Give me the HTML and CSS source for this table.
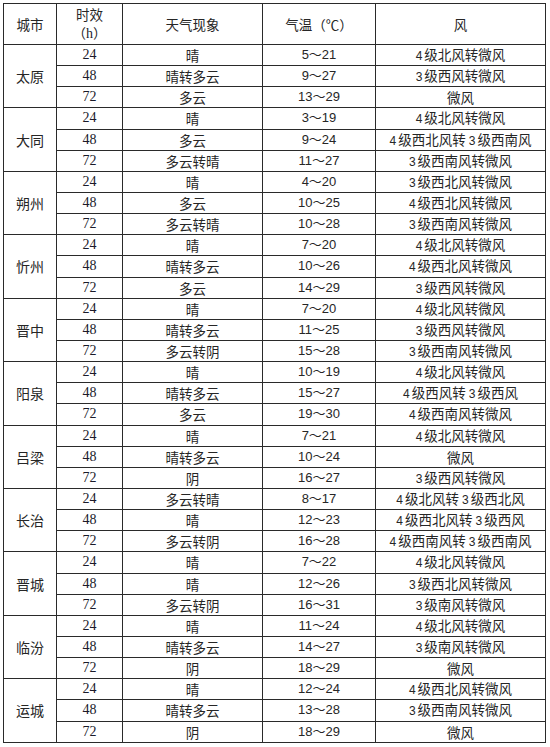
FILE: index.html
```html
<!DOCTYPE html>
<html lang="zh">
<head>
<meta charset="utf-8">
<link rel="stylesheet" href="styles.css">
</head>
<body>
<table class="wx">
<colgroup>
<col class="c-city"><col class="c-h"><col class="c-w"><col class="c-t"><col class="c-f">
</colgroup>
<thead>
<tr class="head"><th>城市</th><th>时效<br><span class="hh">（<span class="num">h</span>）</span></th><th>天气现象</th><th>气温（℃）</th><th>风</th></tr>
</thead>
<tbody>
<tr><td rowspan="3" class="city">太原</td><td class="num">24</td><td>晴</td><td class="tmp">5～21</td><td><span class="d">4</span>级北风转微风</td></tr>
<tr><td class="num">48</td><td>晴转多云</td><td class="tmp">9～27</td><td><span class="d">3</span>级西风转微风</td></tr>
<tr><td class="num">72</td><td>多云</td><td class="tmp">13～29</td><td>微风</td></tr>

<tr><td rowspan="3" class="city">大同</td><td class="num">24</td><td>晴</td><td class="tmp">3～19</td><td><span class="d">4</span>级北风转微风</td></tr>
<tr><td class="num">48</td><td>多云</td><td class="tmp">9～24</td><td><span class="d">4</span>级西北风转 <span class="d">3</span>级西南风</td></tr>
<tr><td class="num">72</td><td>多云转晴</td><td class="tmp">11～27</td><td><span class="d">3</span>级西南风转微风</td></tr>

<tr><td rowspan="3" class="city">朔州</td><td class="num">24</td><td>晴</td><td class="tmp">4～20</td><td><span class="d">3</span>级西北风转微风</td></tr>
<tr><td class="num">48</td><td>多云</td><td class="tmp">10～25</td><td><span class="d">4</span>级西北风转微风</td></tr>
<tr><td class="num">72</td><td>多云转晴</td><td class="tmp">10～28</td><td><span class="d">3</span>级西南风转微风</td></tr>

<tr><td rowspan="3" class="city">忻州</td><td class="num">24</td><td>晴</td><td class="tmp">7～20</td><td><span class="d">4</span>级北风转微风</td></tr>
<tr><td class="num">48</td><td>晴转多云</td><td class="tmp">10～26</td><td><span class="d">4</span>级西北风转微风</td></tr>
<tr><td class="num">72</td><td>多云</td><td class="tmp">14～29</td><td><span class="d">3</span>级西风转微风</td></tr>

<tr><td rowspan="3" class="city">晋中</td><td class="num">24</td><td>晴</td><td class="tmp">7～20</td><td><span class="d">4</span>级北风转微风</td></tr>
<tr><td class="num">48</td><td>晴转多云</td><td class="tmp">11～25</td><td><span class="d">3</span>级西风转微风</td></tr>
<tr><td class="num">72</td><td>多云转阴</td><td class="tmp">15～28</td><td><span class="d">3</span>级西南风转微风</td></tr>

<tr><td rowspan="3" class="city">阳泉</td><td class="num">24</td><td>晴</td><td class="tmp">10～19</td><td><span class="d">4</span>级北风转微风</td></tr>
<tr><td class="num">48</td><td>晴转多云</td><td class="tmp">15～27</td><td><span class="d">4</span>级西风转 <span class="d">3</span>级西风</td></tr>
<tr><td class="num">72</td><td>多云</td><td class="tmp">19～30</td><td><span class="d">4</span>级西南风转微风</td></tr>

<tr><td rowspan="3" class="city">吕梁</td><td class="num">24</td><td>晴</td><td class="tmp">7～21</td><td><span class="d">4</span>级北风转微风</td></tr>
<tr><td class="num">48</td><td>晴转多云</td><td class="tmp">10～24</td><td>微风</td></tr>
<tr><td class="num">72</td><td>阴</td><td class="tmp">16～27</td><td><span class="d">3</span>级西风转微风</td></tr>

<tr><td rowspan="3" class="city">长治</td><td class="num">24</td><td>多云转晴</td><td class="tmp">8～17</td><td><span class="d">4</span>级北风转 <span class="d">3</span>级西北风</td></tr>
<tr><td class="num">48</td><td>晴</td><td class="tmp">12～23</td><td><span class="d">4</span>级西北风转 <span class="d">3</span>级西风</td></tr>
<tr><td class="num">72</td><td>多云转阴</td><td class="tmp">16～28</td><td><span class="d">4</span>级西南风转 <span class="d">3</span>级西南风</td></tr>

<tr><td rowspan="3" class="city">晋城</td><td class="num">24</td><td>晴</td><td class="tmp">7～22</td><td><span class="d">4</span>级北风转微风</td></tr>
<tr><td class="num">48</td><td>晴</td><td class="tmp">12～26</td><td><span class="d">3</span>级西北风转微风</td></tr>
<tr><td class="num">72</td><td>多云转阴</td><td class="tmp">16～31</td><td><span class="d">3</span>级南风转微风</td></tr>

<tr><td rowspan="3" class="city">临汾</td><td class="num">24</td><td>晴</td><td class="tmp">11～24</td><td><span class="d">4</span>级北风转微风</td></tr>
<tr><td class="num">48</td><td>晴转多云</td><td class="tmp">14～27</td><td><span class="d">3</span>级南风转微风</td></tr>
<tr><td class="num">72</td><td>阴</td><td class="tmp">18～29</td><td>微风</td></tr>

<tr><td rowspan="3" class="city">运城</td><td class="num">24</td><td>晴</td><td class="tmp">12～24</td><td><span class="d">4</span>级西北风转微风</td></tr>
<tr><td class="num">48</td><td>晴转多云</td><td class="tmp">13～28</td><td><span class="d">3</span>级西南风转微风</td></tr>
<tr><td class="num">72</td><td>阴</td><td class="tmp">18～29</td><td>微风</td></tr>
</tbody>
</table>
</body>
</html>
```
FILE: styles.css
```css
html, body {
  background: #ffffff;
}
body {
  margin: 3px 0 0 3px;
  font-family: "Noto Sans CJK SC", "Noto Sans", sans-serif;
  font-size: 13.5px;
  color: #262626;
}
.wx {
  border-collapse: collapse;
  table-layout: fixed;
  width: 542px;
}
.c-city { width: 53px; }
.c-h { width: 66px; }
.c-w { width: 140px; }
.c-t { width: 113px; }
.c-f { width: 170px; }
.wx th, .wx td {
  border: 1px solid #2a2a2a;
  padding: 0;
  text-align: center;
  vertical-align: middle;
  font-weight: 400;
  line-height: 14px;
  white-space: nowrap;
  overflow: hidden;
}
.wx tbody tr {
  height: 21.15px;
}
.wx thead tr.head {
  height: 41px;
}
.wx th {
  line-height: 18px;
}
.num {
  font-family: "Liberation Serif", "Noto Sans CJK SC", serif;
  font-size: 14px;
  color: #1a1a2a;
}
.hh .num {
  font-weight: 400;
}
.tmp {
  font-family: "Liberation Sans", "Noto Sans CJK SC", sans-serif;
  font-size: 13px;
}
.d {
  font-family: "Liberation Sans", sans-serif;
  font-size: 12px;
  margin-right: 2px;
}
.city {
  font-size: 14px;
}
```
